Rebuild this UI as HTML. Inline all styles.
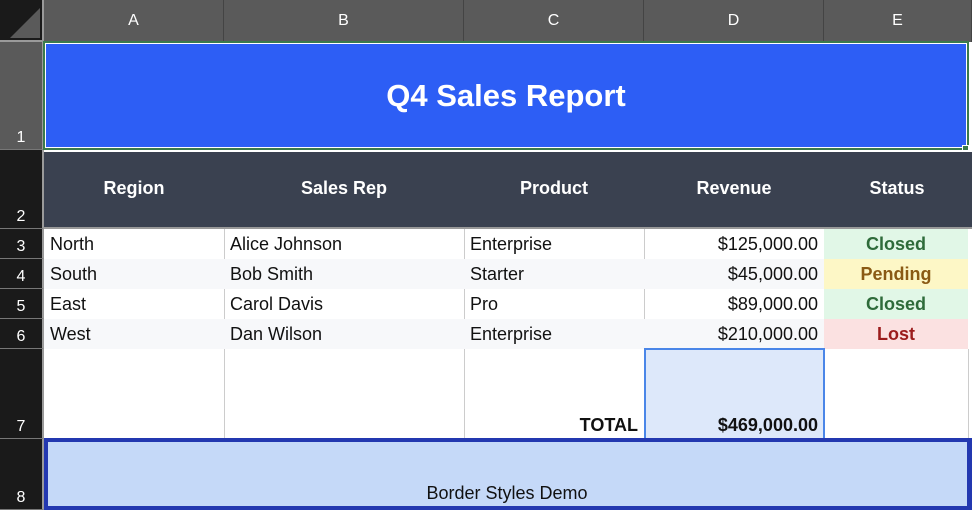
<!DOCTYPE html><html><head><style>
body{margin:0;width:972px;height:510px;overflow:hidden;background:#fff;font-family:"Liberation Sans",sans-serif;position:relative}
div{position:absolute;box-sizing:border-box}
.ch{top:0;height:42px;background:#5a5a5a;color:#fff;font-size:16px;text-align:center;line-height:42px;border-right:1px solid #444}
.rh{left:0;width:44px;background:#1a1a1a;color:#fff;font-size:16px;text-align:center;border-bottom:1px solid #777;border-right:2px solid #9a9a9a}
.rh span{position:absolute;bottom:2px;left:0;right:0}
.c{font-size:18px;line-height:30px;padding:0 6px;white-space:nowrap;color:#111}
.r{text-align:right}
.s{text-align:center;font-weight:bold}
.h{color:#fff;font-weight:bold;font-size:18px;text-align:center;top:178px}
</style></head><body>
<div style="left:0;top:0;width:44px;height:42px;background:#1a1a1a;border-right:2px solid #9a9a9a;border-bottom:2px solid #9a9a9a"></div>
<svg style="position:absolute;left:8px;top:8px" width="32" height="30"><polygon points="32,0 32,30 2,30" fill="#5a5a5a"/></svg>
<div class="ch" style="left:44px;width:180px">A</div>
<div class="ch" style="left:224px;width:240px">B</div>
<div class="ch" style="left:464px;width:180px">C</div>
<div class="ch" style="left:644px;width:180px">D</div>
<div class="ch" style="left:824px;width:148px">E</div>
<div class="rh" style="top:42px;height:108px;background:#5a5a5a"><span>1</span></div>
<div class="rh" style="top:150px;height:79px"><span>2</span></div>
<div class="rh" style="top:229px;height:30px"><span>3</span></div>
<div class="rh" style="top:259px;height:30px"><span>4</span></div>
<div class="rh" style="top:289px;height:30px"><span>5</span></div>
<div class="rh" style="top:319px;height:30px"><span>6</span></div>
<div class="rh" style="top:349px;height:90px"><span>7</span></div>
<div class="rh" style="top:439px;height:71px"><span>8</span></div>

<div style="left:43px;top:41px;width:926px;height:109px;border:2px solid #3b7a4c;background:#fff;padding:1px">
<div style="left:1px;top:1px;right:1px;bottom:1px;background:#2d5ef5;color:#fff;font-weight:bold;font-size:31px;text-align:center;line-height:103px">Q4 Sales Report</div></div>
<div style="left:962px;top:145px;width:7px;height:7px;background:#3b7a4c;border:1px solid #fff"></div>

<div style="left:44px;top:150px;width:928px;height:79px;background:#3a4150;border-top:2px solid #fff;border-bottom:2px solid #999"></div>
<div class="h" style="left:44px;width:180px">Region</div>
<div class="h" style="left:224px;width:240px">Sales Rep</div>
<div class="h" style="left:464px;width:180px">Product</div>
<div class="h" style="left:644px;width:180px">Revenue</div>
<div class="h" style="left:824px;width:146px">Status</div>

<div style="left:44px;top:259px;width:780px;height:30px;background:#f7f8fa"></div>
<div style="left:44px;top:319px;width:780px;height:30px;background:#f7f8fa"></div>
<div style="left:224px;top:229px;width:1px;height:30px;background:#ccc"></div>
<div style="left:464px;top:229px;width:1px;height:30px;background:#ccc"></div>
<div style="left:644px;top:229px;width:1px;height:30px;background:#ccc"></div>
<div style="left:224px;top:289px;width:1px;height:30px;background:#ccc"></div>
<div style="left:464px;top:289px;width:1px;height:30px;background:#ccc"></div>
<div style="left:644px;top:289px;width:1px;height:30px;background:#ccc"></div>
<div style="left:224px;top:349px;width:1px;height:90px;background:#ccc"></div>
<div style="left:464px;top:349px;width:1px;height:90px;background:#ccc"></div>
<div style="left:968px;top:349px;width:1px;height:90px;background:#ccc"></div>

<div class="c" style="left:44px;top:229px">North</div><div class="c" style="left:224px;top:229px">Alice Johnson</div><div class="c" style="left:464px;top:229px">Enterprise</div><div class="c r" style="left:644px;top:229px;width:180px">$125,000.00</div>
<div class="c s" style="left:824px;top:229px;width:144px;background:#e1f7e7;color:#2e6b3a">Closed</div>
<div class="c" style="left:44px;top:259px">South</div><div class="c" style="left:224px;top:259px">Bob Smith</div><div class="c" style="left:464px;top:259px">Starter</div><div class="c r" style="left:644px;top:259px;width:180px">$45,000.00</div>
<div class="c s" style="left:824px;top:259px;width:144px;background:#fdf7c6;color:#8a5a14">Pending</div>
<div class="c" style="left:44px;top:289px">East</div><div class="c" style="left:224px;top:289px">Carol Davis</div><div class="c" style="left:464px;top:289px">Pro</div><div class="c r" style="left:644px;top:289px;width:180px">$89,000.00</div>
<div class="c s" style="left:824px;top:289px;width:144px;background:#e1f7e7;color:#2e6b3a">Closed</div>
<div class="c" style="left:44px;top:319px">West</div><div class="c" style="left:224px;top:319px">Dan Wilson</div><div class="c" style="left:464px;top:319px">Enterprise</div><div class="c r" style="left:644px;top:319px;width:180px">$210,000.00</div>
<div class="c s" style="left:824px;top:319px;width:144px;background:#fbe1e1;color:#9b1c1c">Lost</div>

<div style="left:644px;top:348px;width:181px;height:92px;background:#dde8fa;border:2px solid #4a86e8"></div>
<div class="c r" style="left:464px;top:410px;width:180px;font-weight:bold">TOTAL</div>
<div class="c r" style="left:644px;top:410px;width:180px;font-weight:bold">$469,000.00</div>

<div style="left:44px;top:438px;width:928px;height:72px;background:#c5d9f8;border:4px solid #2338b0;border-right-width:5px"></div>
<div class="c" style="left:44px;top:478px;width:926px;text-align:center">Border Styles Demo</div>
</body></html>
